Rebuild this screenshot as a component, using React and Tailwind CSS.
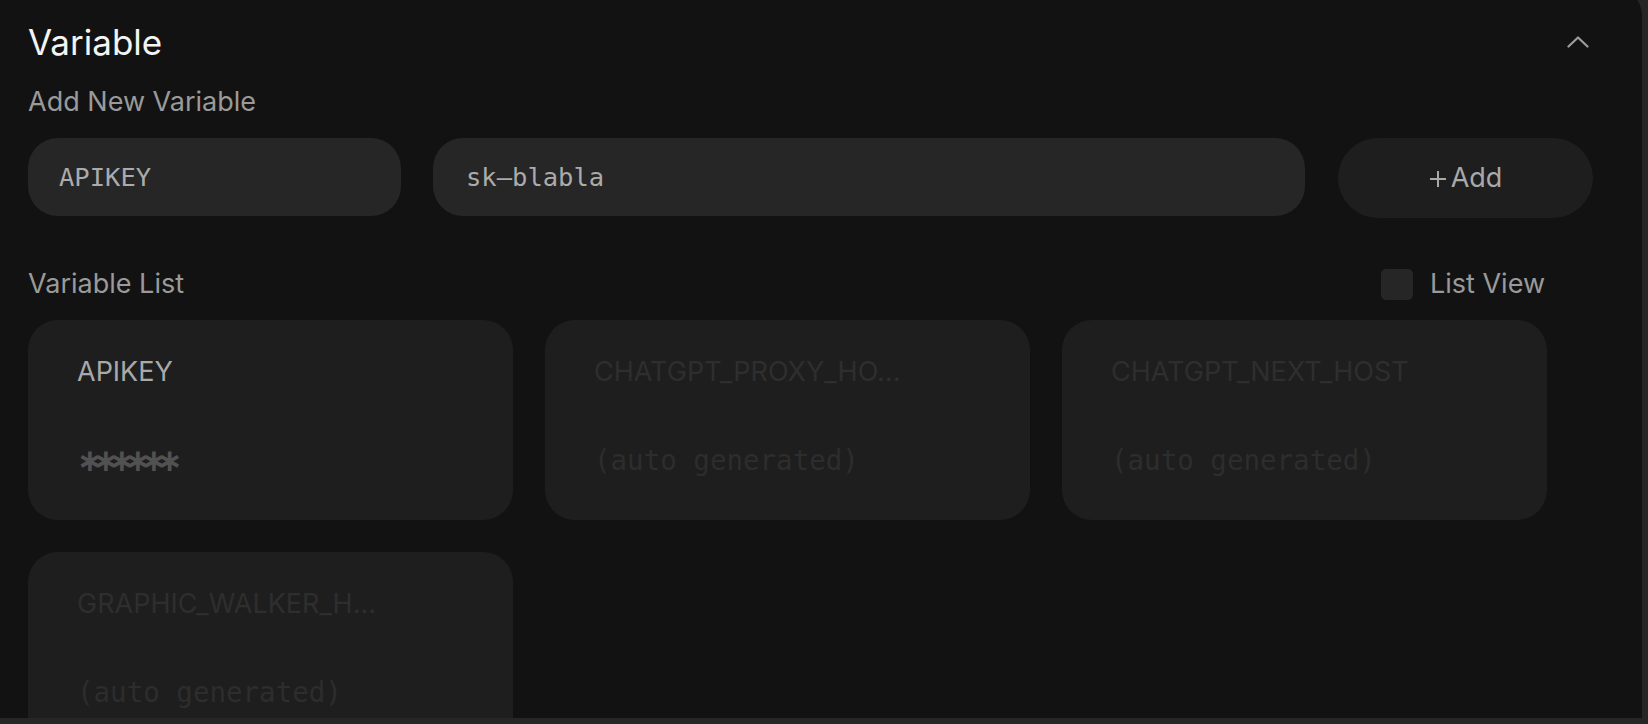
import React from "react";

const sans = { fontFamily: "Inter, 'Noto Sans', sans-serif" };

function Card({ name, value, dim, stars }) {
  return (
    <div className="flex h-[200px] w-[485px] flex-col rounded-[30px] bg-[#1e1e1e] pl-[49px] pt-[36px]">
      <div
        className={`h-[32px] overflow-hidden whitespace-nowrap font-['Inter',sans-serif] text-[27px] leading-[32px] ${
          dim ? "text-[#2e2e2e]" : "text-[#a9a9a9]"
        }`}
      >
        {name}
      </div>
      {stars ? (
        <div className="mt-[56px] flex h-[32px] items-center whitespace-nowrap font-['DejaVu_Sans',sans-serif] text-[31px] font-bold leading-[32px] tracking-[-10px] text-[#515151]">
          {value}
        </div>
      ) : (
        <div
          className={`mt-[56px] h-[32px] whitespace-nowrap font-['DejaVu_Sans_Mono',monospace] text-[27.5px] leading-[32px] ${
            dim ? "text-[#2d2d2d]" : "text-[#555555]"
          }`}
        >
          {value}
        </div>
      )}
    </div>
  );
}

export default function App() {
  return (
    <div className="h-[724px] w-[1648px] overflow-hidden bg-[#262626]" style={sans}>
      <div className="mt-[-10px] h-[728px] w-[1642px] overflow-hidden rounded-tr-[25px] bg-[#121212] pl-[28px] pt-[32px] font-['Inter',sans-serif]">
        <div className="flex h-[40px] w-[1561px] items-center justify-between">
          <div className="text-[35px] leading-[40px] text-[#f4f4f4]">Variable</div>
          <svg width="22" height="12" viewBox="0 0 22 12" fill="none" className="mt-[-1px]">
            <polyline
              points="1.5,10.5 11,1.5 20.5,10.5"
              stroke="#9c9c9c"
              strokeWidth="2.2"
              strokeLinecap="round"
              strokeLinejoin="round"
            />
          </svg>
        </div>

        <div className="mt-[24px] text-[27px] leading-[32px] text-[#9a9a9a]">Add New Variable</div>

        <div className="mt-[20px] flex items-start">
          <div className="flex h-[78px] w-[373px] items-center rounded-[30px] bg-[#262626] pl-[31px] font-['DejaVu_Sans_Mono',monospace] text-[25.5px] text-[#ababab]">
            APIKEY
          </div>
          <div className="ml-[32px] flex h-[78px] w-[872px] items-center rounded-[30px] bg-[#262626] pl-[33px] font-['DejaVu_Sans_Mono',monospace] text-[25.5px] text-[#ababab]">
            sk–blabla
          </div>
          <div className="ml-[33px] flex h-[80px] w-[255px] items-center justify-center rounded-[40px] bg-[#1e1e1e] text-[27px] text-[#a9a9a9]">
            <svg width="18" height="18" viewBox="0 0 18 18" className="mr-[4px] mt-[1px]">
              <path d="M9 1v16M1 9h16" stroke="#a9a9a9" strokeWidth="2" />
            </svg>
            <span>Add</span>
          </div>
        </div>

        <div className="mt-[50px] flex h-[32px] w-[1517px] items-center justify-between">
          <div className="text-[27px] leading-[32px] text-[#9a9a9a]">Variable List</div>
          <div className="flex items-center">
            <div className="h-[31px] w-[32px] rounded-[5px] bg-[#262626]" />
            <div className="ml-[17px] text-[27px] leading-[32px] text-[#9a9a9a]">List View</div>
          </div>
        </div>

        <div className="mt-[20px] grid w-[1519px] grid-cols-[485px_485px_485px] gap-x-[32px] gap-y-[32px]">
          <Card name="APIKEY" value="∗∗∗∗∗∗" stars />
          <Card name="CHATGPT_PROXY_HO..." value="(auto generated)" dim />
          <Card name="CHATGPT_NEXT_HOST" value="(auto generated)" dim />
          <Card name="GRAPHIC_WALKER_H..." value="(auto generated)" dim />
        </div>
      </div>
    </div>
  );
}
